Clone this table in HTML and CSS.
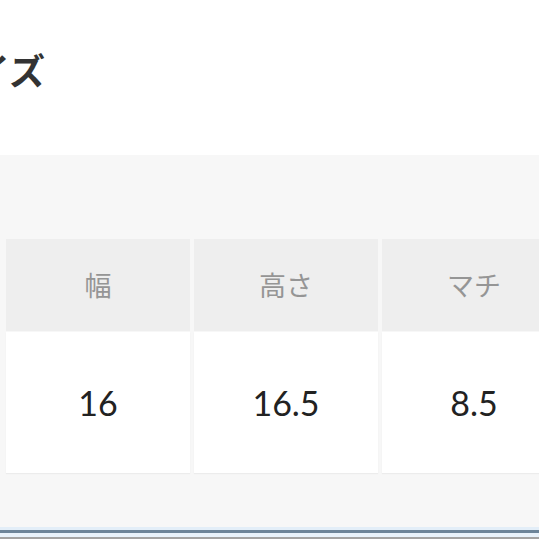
FILE: index.html
```html
<!DOCTYPE html>
<html lang="ja">
<head>
<meta charset="utf-8">
<link rel="stylesheet" href="styles.css">
</head>
<body>
<div class="page">
  <h2 class="title">サイズ</h2>
  <div class="panel">
    <div class="table">
      <div class="th">幅</div>
      <div class="th">高さ</div>
      <div class="th">マチ</div>
      <div class="td">16</div>
      <div class="td">16.5</div>
      <div class="td">8.5</div>
    </div>
  </div>
  <div class="bar"></div>
</div>
</body>
</html>
```
FILE: styles.css
```css
html, body {
  margin: 0;
  padding: 0;
  background: #ffffff;
}
.page {
  width: 539px;
  height: 539px;
  overflow: hidden;
  display: flex;
  flex-direction: column;
}
.title {
  margin: 0;
  height: 155px;
  box-sizing: border-box;
  padding-top: 46px;
  margin-left: -62px;
  font-family: "Noto Sans CJK JP", sans-serif;
  font-weight: 700;
  font-size: 36px;
  line-height: 46px;
  color: #333333;
}
.panel {
  background: #f7f7f7;
  height: 372px;
  box-sizing: border-box;
  padding: 84px 0 0 6px;
}
.table {
  display: grid;
  grid-template-columns: 184px 184px 184px;
  grid-template-rows: 92px 141px;
  column-gap: 4px;
  row-gap: 1px;
}
.th {
  background: #eeeeee;
  display: flex;
  align-items: center;
  justify-content: center;
  font-family: "Noto Sans CJK JP", sans-serif;
  font-size: 27px;
  color: #959595;
  padding-bottom: 2px;
}
.td {
  background: #ffffff;
  box-shadow: 0 1px 1px #ececec;
  display: flex;
  align-items: center;
  justify-content: center;
  font-family: Lato, "Noto Sans", sans-serif;
  font-size: 34px;
  color: #222222;
}
.bar {
  height: 12px;
  background: linear-gradient(#e3eef8 0, #e3eef8 3px, #6c8499 3px, #6c8499 6px, #e8f2fb 6px, #e8f2fb 10px, #a3a3a3 10px);
}
```
